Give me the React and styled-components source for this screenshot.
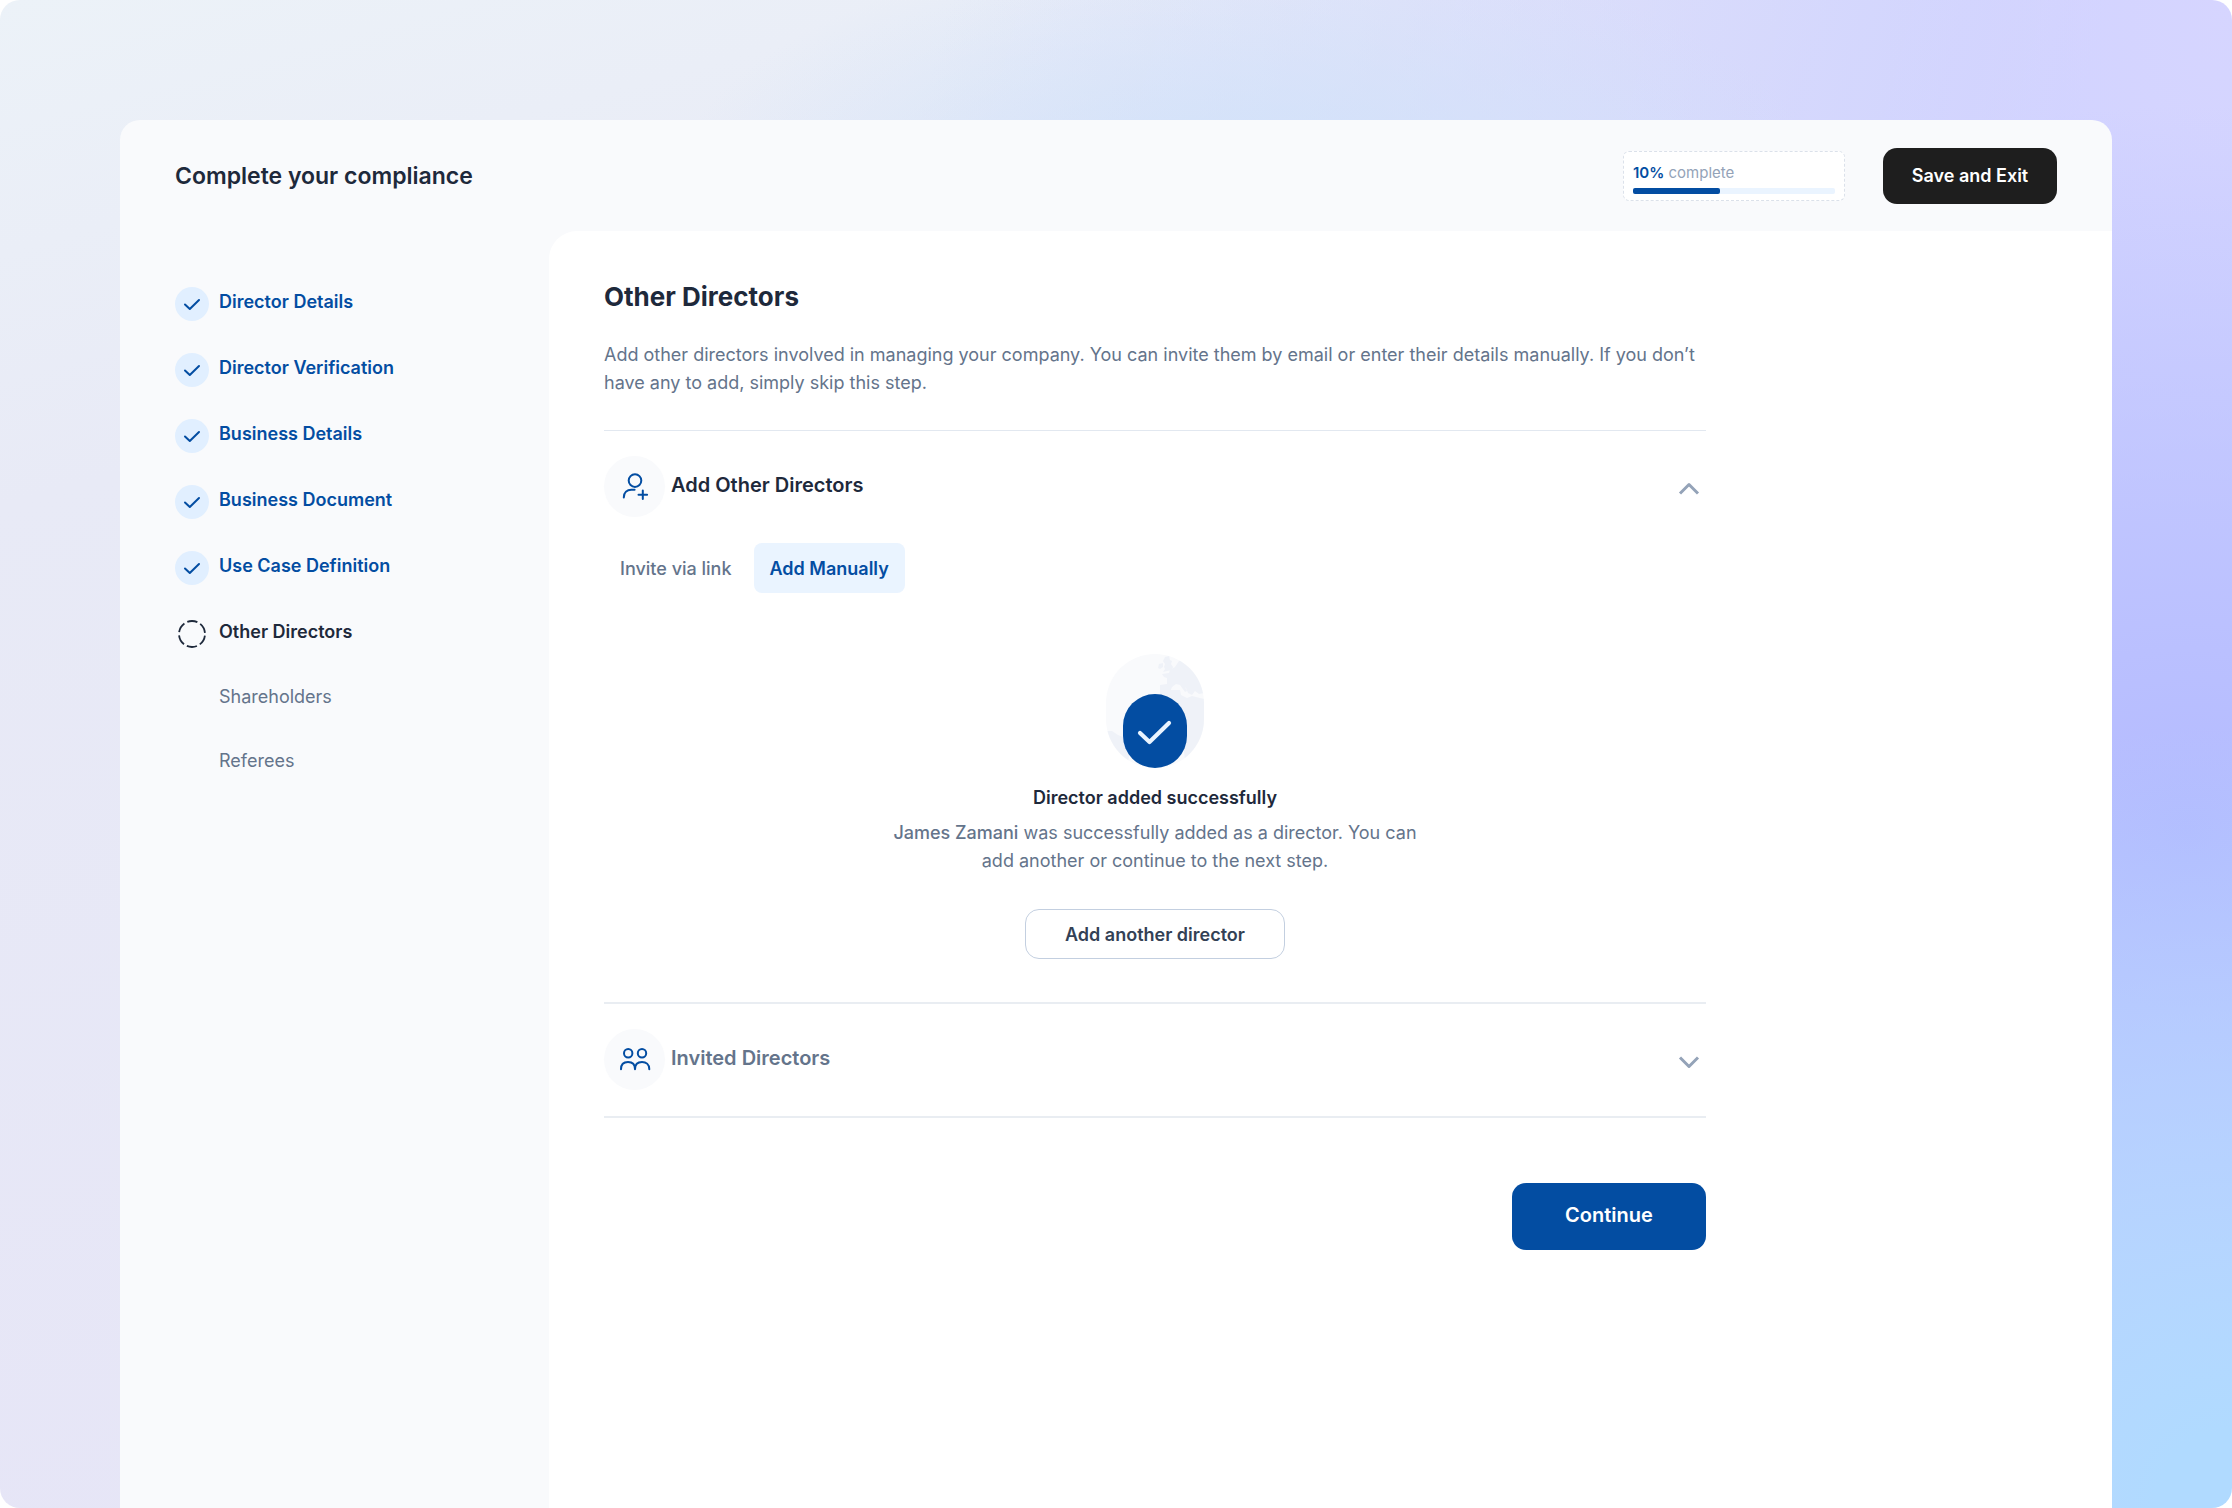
import { useState } from 'react';
import styled, { createGlobalStyle } from 'styled-components';

const STEPS = [
	{ name: 'Director Details', status: 'done' },
	{ name: 'Director Verification', status: 'done' },
	{ name: 'Business Details', status: 'done' },
	{ name: 'Business Document', status: 'done' },
	{ name: 'Use Case Definition', status: 'done' },
	{ name: 'Other Directors', status: 'current' },
	{ name: 'Shareholders', status: 'todo' },
	{ name: 'Referees', status: 'todo' },
];

const TABS = ['Invite via link', 'Add Manually'];

const StepIcon = ({ status }) => (
	<StepMark $status={status}>
		{status === 'done' && (
			<svg width="34" height="34" viewBox="0 0 34 34" fill="none" aria-hidden="true">
				<path
					d="M10 17.5 14.8 22 24 13"
					stroke="#034da2"
					strokeWidth="2"
					strokeLinecap="round"
					strokeLinejoin="round"
				/>
			</svg>
		)}
		{status === 'current' && (
			<svg width="34" height="34" viewBox="0 0 34 34" fill="none" aria-hidden="true">
				<circle
					cx="17"
					cy="17"
					r="13"
					stroke="#1e293b"
					strokeWidth="1.8"
					strokeDasharray="10.3 3.31"
					strokeDashoffset="-1.65"
				/>
			</svg>
		)}
	</StepMark>
);

const UserPlusIcon = () => (
	<LineIcon viewBox="0 0 34 34" aria-hidden="true">
		<circle cx="17" cy="11.6" r="6.3" />
		<path d="M5.800 28.400c0-4.800 3.200-7.600 7.600-7.600h3.200" />
		<path d="M24.800 21.400v8.600M20.500 25.700h8.600" />
	</LineIcon>
);

const UsersIcon = () => (
	<LineIcon viewBox="0 0 34 34" aria-hidden="true">
		<circle cx="10.2" cy="11.3" r="4.2" />
		<circle cx="24" cy="11.3" r="4.2" />
		<path d="M3 27.2c0-4.8 3-7.2 7-7.2s7 2.4 7 7.2c0-4.8 3-7.2 7-7.2s7.3 2.4 7.3 7.2" />
	</LineIcon>
);

const Chevron = ({ open }) => (
	<ChevronIcon viewBox="0 0 24 16" aria-hidden="true">
		<path d={open ? 'M3 12.5 12 3.5l9 9' : 'M3 3.5l9 9 9-9'} />
	</ChevronIcon>
);

const SuccessBadge = () => (
	<svg width="98" height="114" viewBox="0 0 98 114" fill="none" aria-hidden="true">
		<defs>
			<clipPath id="globe">
				<rect width="98" height="114" rx="49" />
			</clipPath>
		</defs>
		<rect width="98" height="114" rx="49" fill="#f9fafc" />
		<g clipPath="url(#globe)" fill="#eff2f8">
			<path d="M59 3l4-1 1 4 2 1-1 3 2 3-1 3-5 1-4 1 2-3-1-2 1-3-2-3z" />
			<path d="M53 10l4-1v4l-3 2-2-1z" />
			<path d="M56 20l7-1 1-3 5-3 4-6 3-2 4 2 18 16v16l-5 1-4-3-3 4-4-2-2-5-4-3-1-3 4 5 2 4-2 1-5-7-4-1-4 3-2 5-4 4-6-1v-10l7-1v-6l-3-1z" />
			<path d="M55 40l10-4 9 0 1 5 6 3 5-2 12 3v69H80l-3-24-4-9-13-3-8-10v-16z" />
			<path d="M0 77l6 0 6 4 5 2 8 8-4 23H0z" />
		</g>
		<rect x="17" y="40" width="64" height="74" rx="32" fill="#034da2" />
		<path
			d="M34 79 43.5 88 63 69"
			stroke="#eaf4ff"
			strokeWidth="4.2"
			strokeLinecap="round"
			strokeLinejoin="round"
		/>
	</svg>
);

const App = () => {
	const [tab, setTab] = useState('Add Manually');

	return (
		<Page>
			<GlobalStyle />
			<Window>
				<Header>
					<HeaderTitle>Complete your compliance</HeaderTitle>
					<HeaderRight>
						<Progress>
							<ProgressText>
								<b>10%</b> complete
							</ProgressText>
							<Track>
								<Fill />
							</Track>
						</Progress>
						<SaveBtn type="button">Save and Exit</SaveBtn>
					</HeaderRight>
				</Header>
				<Body>
					<Sidebar>
						{STEPS.map(({ name, status }) => (
							<Step key={name} href="#" $status={status}>
								<StepIcon status={status} />
								<StepName>{name}</StepName>
							</Step>
						))}
					</Sidebar>
					<Main>
						<Content>
							<Title>Other Directors</Title>
							<Desc>
								Add other directors involved in managing your company. You can invite them by email or
								enter their details manually. If you don’t have any to add, simply skip this step.
							</Desc>
							<Divider $thin />
							<SectionBtn type="button" aria-expanded="true">
								<IconCircle>
									<UserPlusIcon />
								</IconCircle>
								<SectionName $open>Add Other Directors</SectionName>
								<Chevron open />
							</SectionBtn>
							<Tabs>
								{TABS.map(name => (
									<Tab
										key={name}
										type="button"
										$active={tab === name}
										onClick={() => setTab(name)}
									>
										{name}
									</Tab>
								))}
							</Tabs>
							<Success>
								<SuccessBadge />
								<SuccessTitle>Director added successfully</SuccessTitle>
								<SuccessText>
									<b>James Zamani</b> was successfully added as a director. You can add another or
									continue to the next step.
								</SuccessText>
								<OutlineBtn type="button">Add another director</OutlineBtn>
							</Success>
							<Divider />
							<SectionBtn type="button" aria-expanded="false">
								<IconCircle>
									<UsersIcon />
								</IconCircle>
								<SectionName>Invited Directors</SectionName>
								<Chevron />
							</SectionBtn>
							<Divider />
							<ContinueBtn type="button">Continue</ContinueBtn>
						</Content>
					</Main>
				</Body>
			</Window>
		</Page>
	);
};
export default App;

const GlobalStyle = createGlobalStyle`
	* {
		box-sizing: border-box;
	}
	body {
		margin: 0;
		background-color: #ffffff;
		font-family: Inter, 'Liberation Sans', sans-serif;
	}
	h1, h2, h3, p {
		margin: 0;
	}
	button {
		font-family: inherit;
		cursor: pointer;
	}
`;
const Page = styled.div`
	display: flex;
	min-height: 100vh;
	padding: 120px 120px 0;
	border-radius: 20px;
	background:
		radial-gradient(ellipse 34% 52% at 100% 100%, #b0daff 10%, rgba(176, 218, 255, 0) 100%),
		radial-gradient(ellipse 38% 48% at 98% 55%, #b3baff 0%, rgba(179, 186, 255, 0) 100%),
		radial-gradient(ellipse 16% 36% at 100% 0%, #d6d5ff 0%, rgba(214, 213, 255, 0) 100%),
		radial-gradient(ellipse 26% 17% at 56% 13%, #d0e2fa 0%, rgba(208, 226, 250, 0) 100%),
		linear-gradient(105deg, rgba(207, 210, 255, 0) 36%, #cfd2ff 80%),
		linear-gradient(165deg, #ecf2f8 0%, #e8eaf6 24%, #e5e3f7 100%);
`;
const Window = styled.div`
	flex: 1;
	display: flex;
	flex-direction: column;
	border-radius: 20px 20px 0 0;
	background-color: #f9fafc;
	overflow: hidden;
`;
const Header = styled.header`
	display: flex;
	align-items: center;
	justify-content: space-between;
	height: 111px;
	padding: 0 55px;
`;
const HeaderTitle = styled.h1`
	font-size: 23px;
	font-weight: 600;
	line-height: 32px;
	color: #1e293b;
`;
const HeaderRight = styled.div`
	display: flex;
	align-items: center;
	gap: 38px;
`;
const Progress = styled.div`
	display: flex;
	flex-direction: column;
	gap: 4px;
	width: 222px;
	height: 50px;
	padding: 10px 9px 6px;
	border: 1px dashed #dbe1ea;
	border-radius: 6px;
	background-color: #ffffff;
`;
const ProgressText = styled.p`
	font-size: 15px;
	line-height: 22px;
	color: #94a3b8;

	b {
		font-weight: 600;
		color: #034da2;
	}
`;
const Track = styled.div`
	height: 6px;
	border-radius: 2px;
	background-color: #eaf4ff;
`;
const Fill = styled.div`
	width: 43%;
	height: 100%;
	border-radius: 2px;
	background-color: #034da2;
`;
const SaveBtn = styled.button`
	width: 174px;
	height: 56px;
	border: none;
	border-radius: 14px;
	background-color: #1e1e1e;
	color: #ffffff;
	font-size: 18px;
	font-weight: 600;
`;
const Body = styled.div`
	flex: 1;
	display: flex;
`;
const Sidebar = styled.nav`
	display: flex;
	flex-direction: column;
	gap: 32px;
	width: 429px;
	padding: 56px 55px 0;
`;
const Step = styled.a`
	display: flex;
	align-items: center;
	gap: 10px;
	font-size: 18px;
	font-weight: ${({ $status }) => ($status === 'todo' ? 400 : 600)};
	color: ${({ $status }) =>
		$status === 'done' ? '#034da2' : $status === 'current' ? '#1e293b' : '#64748b'};
	text-decoration: none;
`;
const StepMark = styled.span`
	width: 34px;
	height: ${({ $status }) => ($status === 'todo' ? '32px' : '34px')};
	border-radius: 50%;
	background-color: ${({ $status }) => ($status === 'done' ? '#e1efff' : 'transparent')};
`;
const StepName = styled.span`
	padding-bottom: 4px;
	line-height: 24px;
`;
const Main = styled.main`
	flex: 1;
	padding: 46px 55px;
	border-top-left-radius: 28px;
	background-color: #ffffff;
`;
const Content = styled.div`
	display: flex;
	flex-direction: column;
	max-width: 1102px;
`;
const Title = styled.h2`
	font-size: 26px;
	font-weight: 700;
	line-height: 40px;
	color: #1e293b;
`;
const Desc = styled.p`
	margin: 24px 0 33px;
	font-size: 18px;
	line-height: 28px;
	color: #64748b;
`;
const Divider = styled.hr`
	width: 100%;
	height: ${({ $thin }) => ($thin ? '1px' : '2px')};
	margin: 0;
	border: none;
	background-color: ${({ $thin }) => ($thin ? '#e2e8f0' : '#e9edf2')};
`;
const SectionBtn = styled.button`
	display: flex;
	align-items: center;
	gap: 6px;
	width: 100%;
	height: 110px;
	margin-bottom: 2px;
	padding: 0 5px 0 0;
	border: none;
	background: none;
`;
const IconCircle = styled.span`
	display: flex;
	align-items: center;
	justify-content: center;
	width: 61px;
	height: 61px;
	border-radius: 50%;
	background-color: #f9fafc;
`;
const LineIcon = styled.svg`
	width: 34px;
	height: 34px;
	fill: none;
	stroke: #034da2;
	stroke-width: 2;
	stroke-linecap: round;
	stroke-linejoin: round;
`;
const ChevronIcon = styled.svg`
	width: 24px;
	height: 16px;
	margin: 6px 0 0 auto;
	fill: none;
	stroke: #94a3b8;
	stroke-width: 3;
	stroke-linejoin: round;
`;
const SectionName = styled.span`
	padding-bottom: 3px;
	font-size: 20px;
	font-weight: 600;
	line-height: 28px;
	color: ${({ $open }) => ($open ? '#1e293b' : '#64748b')};
`;
const Tabs = styled.div`
	display: flex;
	gap: 6px;
`;
const Tab = styled.button`
	height: 50px;
	padding: 0 16px;
	border: none;
	border-radius: 8px;
	background-color: ${({ $active }) => ($active ? '#eaf4ff' : 'transparent')};
	color: ${({ $active }) => ($active ? '#034da2' : '#64748b')};
	font-size: 18px;
	font-weight: ${({ $active }) => ($active ? 600 : 500)};
`;
const Success = styled.div`
	display: flex;
	flex-direction: column;
	align-items: center;
	padding: 61px 0 43px;
`;
const SuccessTitle = styled.h3`
	margin: 16px 0 7px;
	font-size: 18px;
	font-weight: 600;
	line-height: 28px;
	color: #1e293b;
`;
const SuccessText = styled.p`
	max-width: 530px;
	margin-bottom: 34px;
	font-size: 18px;
	line-height: 28px;
	text-align: center;
	color: #64748b;

	b {
		font-weight: 500;
	}
`;
const OutlineBtn = styled.button`
	width: 260px;
	height: 50px;
	border: 1px solid #c3cfe0;
	border-radius: 14px;
	background-color: #ffffff;
	color: #334155;
	font-size: 18px;
	font-weight: 600;
`;
const ContinueBtn = styled.button`
	align-self: flex-end;
	width: 194px;
	height: 67px;
	margin-top: 65px;
	padding: 0 0 4px;
	border: none;
	border-radius: 14px;
	background-color: #034da2;
	color: #ffffff;
	font-size: 20px;
	font-weight: 600;
`;
